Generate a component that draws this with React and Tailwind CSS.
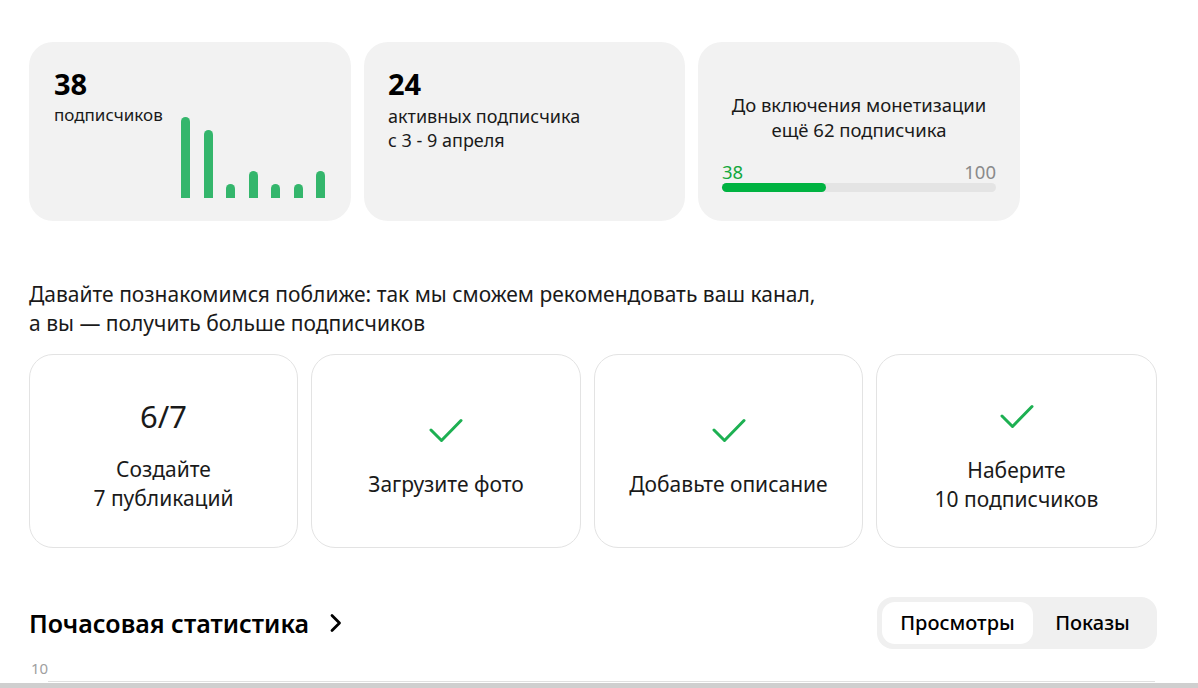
const font = { fontFamily: "'Noto Sans', 'Open Sans', sans-serif" };

const bars = [81, 68, 14, 27, 14, 14, 27];

function Check() {
  return (
    <svg width="34" height="25" viewBox="0 0 34 25" fill="none">
      <path d="M2 12 L12.5 22.5 L32 2.5" stroke="#1db052" strokeWidth="3" strokeLinecap="round" strokeLinejoin="round" />
    </svg>
  );
}

function Chevron() {
  return (
    <svg width="14" height="20" viewBox="0 0 14 20" fill="none">
      <path d="M3 2.5 L10.5 10 L3 17.5" stroke="#000" strokeWidth="2.8" strokeLinecap="round" strokeLinejoin="round" />
    </svg>
  );
}

function StatCards() {
  return (
    <div className="flex gap-[13px]">
      <div className="w-[322px] h-[179px] rounded-[24px] bg-[#f2f2f2] pl-[25px] pr-[26px] pt-[25px] flex">
        <div className="flex-1">
          <div className="text-[29px] font-bold leading-[34px] text-black">38</div>
          <div className="mt-[3px] text-[17px] leading-[22px] text-[#1a1a1a]">подписчиков</div>
        </div>
        <div className="flex items-end gap-[13.5px] h-[131px]">
          {bars.map((h, i) => (
            <div key={i} className="w-[9px] rounded-t-full bg-[#34b66c]" style={{ height: h }} />
          ))}
        </div>
      </div>
      <div className="w-[321px] h-[179px] rounded-[24px] bg-[#f2f2f2] px-[24px] pt-[25px]">
        <div className="text-[29px] font-bold leading-[34px] text-black">24</div>
        <div className="mt-[3px] text-[18px] leading-[24px] text-[#1a1a1a]">активных подписчика</div>
        <div className="text-[18px] leading-[24px] text-[#1a1a1a]">с 3 - 9 апреля</div>
      </div>
      <div className="w-[322px] h-[179px] rounded-[24px] bg-[#f2f2f2] px-[24px] pt-[50px]">
        <div className="text-center text-[18.5px] leading-[25px] text-[#1a1a1a]">
          До включения монетизации
          <br />
          ещё 62 подписчика
        </div>
        <div className="flex justify-between mt-[20px] text-[18.5px] leading-[20px]">
          <span className="text-[#14a83d]">38</span>
          <span className="text-[#8a8a8a]">100</span>
        </div>
        <div className="mt-[1px] h-[9px] rounded-full bg-[#e4e4e4]">
          <div className="h-full w-[38%] rounded-full bg-[#00b341]" />
        </div>
      </div>
    </div>
  );
}

function TaskCard({ width, pt, children }) {
  return (
    <div
      className={`${width} ${pt} h-[194px] rounded-[24px] border border-[#e3e3e3] flex flex-col items-center text-center text-[21px] leading-[29px] text-[#1a1a1a]`}
    >
      {children}
    </div>
  );
}

export default function App() {
  return (
    <div className="min-h-[688px] bg-white pl-[29px] pt-[42px] relative overflow-hidden" style={font}>
      <StatCards />

      <p className="mt-[59px] text-[21px] leading-[29px] text-[#1a1a1a]">
        Давайте познакомимся поближе: так мы сможем рекомендовать ваш канал,
        <br />а вы — получить больше подписчиков
      </p>

      <div className="mt-[16px] flex gap-[13px]">
        <TaskCard width="w-[269px]" pt="pt-[41px]">
          <div className="text-[31px] leading-[40px] mb-[19px]">6/7</div>
          <div>Создайте</div>
          <div>7 публикаций</div>
        </TaskCard>
        <TaskCard width="w-[270px]" pt="pt-[63px]">
          <div className="mb-[27px]"><Check /></div>
          <div>Загрузите фото</div>
        </TaskCard>
        <TaskCard width="w-[269px]" pt="pt-[63px]">
          <div className="mb-[27px]"><Check /></div>
          <div>Добавьте описание</div>
        </TaskCard>
        <TaskCard width="w-[281px]" pt="pt-[49px]">
          <div className="mb-[27px]"><Check /></div>
          <div>Наберите</div>
          <div>10 подписчиков</div>
        </TaskCard>
      </div>

      <div className="mt-[49px] flex items-center justify-between w-[1128px]">
        <div className="flex items-center gap-[20px]">
          <h2 className="text-[25px] font-[560] leading-[32px] text-black">Почасовая статистика</h2>
          <Chevron />
        </div>
        <div className="flex items-center h-[52px] w-[280px] rounded-[16px] bg-[#f0f0f0] p-[5px]">
          <div className="h-full w-[151px] rounded-[13px] bg-white flex items-center justify-center text-[20px] font-medium text-black">
            Просмотры
          </div>
          <div className="flex-1 flex items-center justify-center text-[20px] font-medium text-black">
            Показы
          </div>
        </div>
      </div>

      <div className="mt-[11px] text-[15px] leading-[16px] text-[#a0a0a0] pl-[2px]">10</div>
      <div className="mt-[5px] ml-[19px] w-[1107px] h-px bg-[#e0e0e0]" />
      <div className="absolute left-0 right-0 bottom-0 h-[5px] bg-[#cfcfcf]" />
    </div>
  );
}
